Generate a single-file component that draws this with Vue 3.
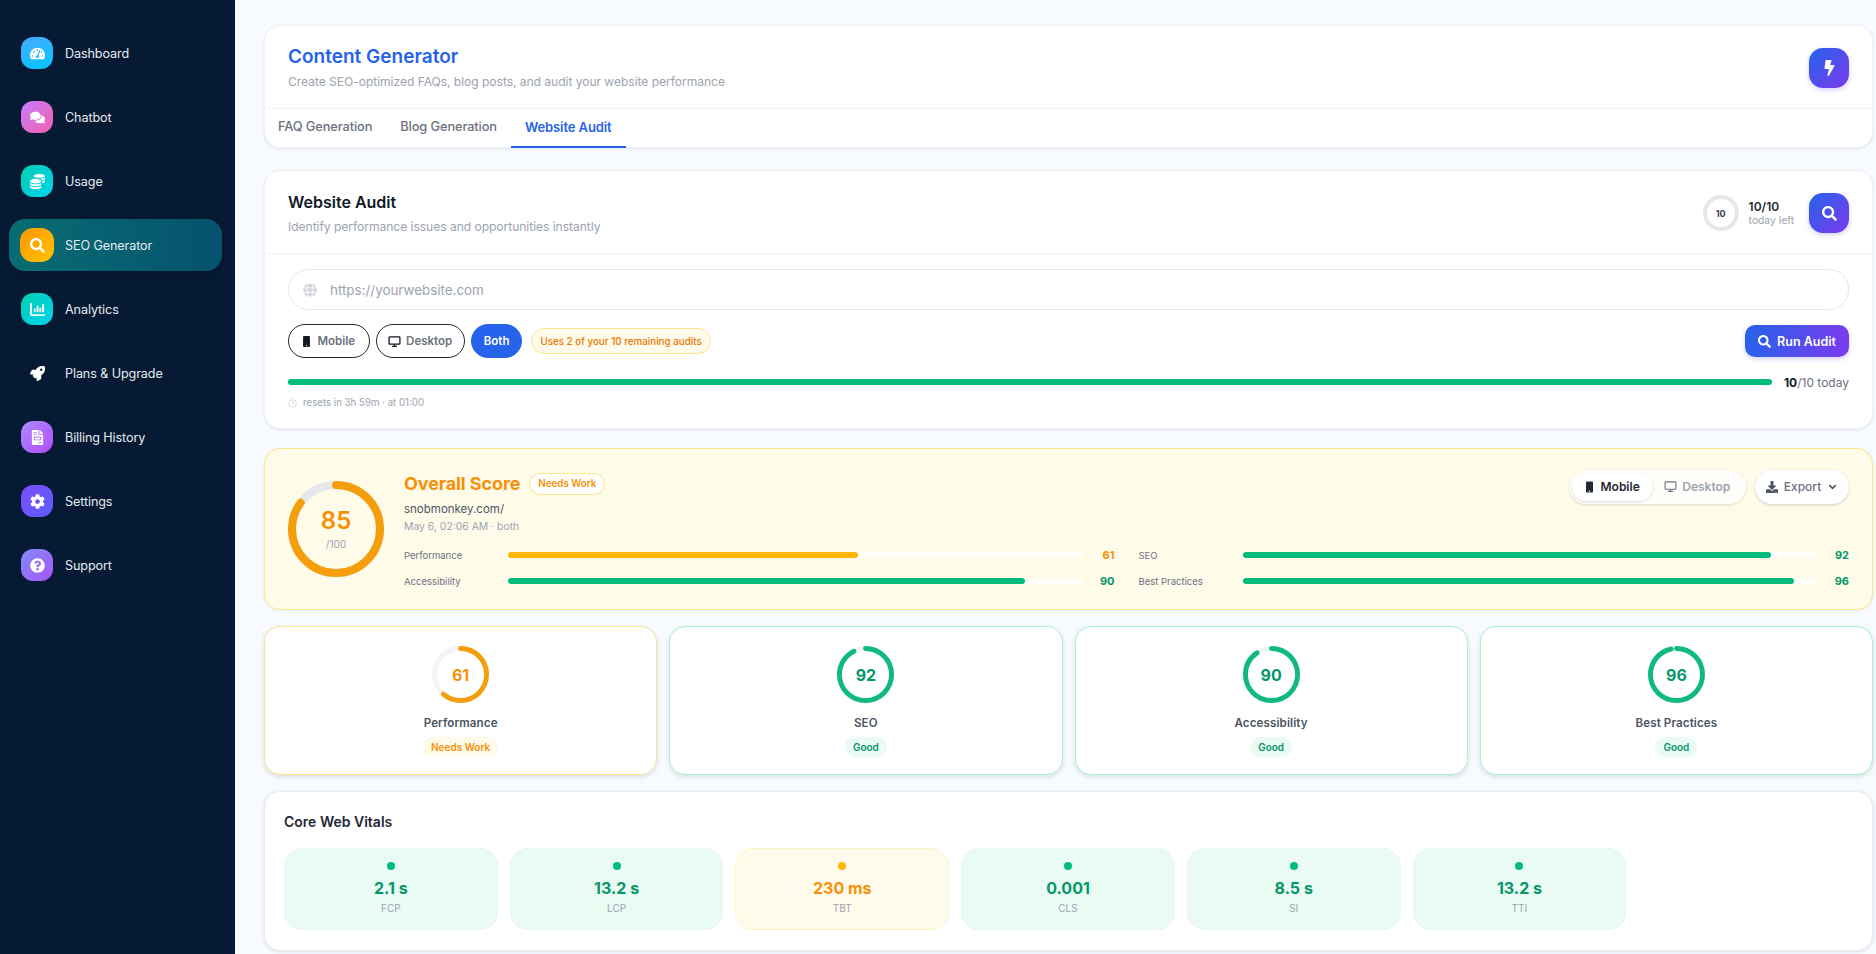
<script setup>
const P = {
  gauge: ['0 0 576 512', 'M288 32C128.94 32 0 160.94 0 320c0 52.8 14.25 102.26 39.06 144.8 5.61 9.62 16.3 15.2 27.44 15.2h443c11.14 0 21.83-5.58 27.44-15.2C561.75 422.26 576 372.8 576 320c0-159.06-128.94-288-288-288zm0 64c14.71 0 26.58 10.13 30.32 23.65-1.11 2.26-2.64 4.23-3.45 6.67l-9.22 27.67c-5.13 3.49-10.97 6.01-17.64 6.01-17.67 0-32-14.33-32-32S270.33 96 288 96zM96 384c-17.67 0-32-14.33-32-32s14.33-32 32-32 32 14.33 32 32-14.33 32-32 32zm48-160c-17.67 0-32-14.33-32-32s14.33-32 32-32 32 14.33 32 32-14.33 32-32 32zm246.77-72.41l-61.33 184C343.13 347.33 352 364.54 352 384c0 11.72-3.38 22.55-8.88 32H232.88c-5.5-9.45-8.88-20.28-8.88-32 0-33.94 26.5-61.43 59.9-63.59l61.34-184.01c4.17-12.56 17.73-19.45 30.36-15.17 12.57 4.19 19.35 17.79 15.17 30.36zm14.66 57.2l15.52-46.55c3.47-1.29 7.13-2.23 11.05-2.23 17.67 0 32 14.33 32 32s-14.33 32-32 32c-11.38-.01-20.89-6.28-26.57-15.22zM480 384c-17.67 0-32-14.33-32-32s14.33-32 32-32 32 14.33 32 32-14.33 32-32 32z'],
  comments: ['0 0 576 512', 'M416 192c0-88.4-93.1-160-208-160S0 103.6 0 192c0 34.3 14.1 65.9 38 92-13.4 30.2-35.5 54.2-35.8 54.5-2.2 2.3-2.8 5.7-1.5 8.7S4.8 352 8 352c36.6 0 66.9-12.3 88.7-25 32.2 15.7 70.3 25 111.3 25 114.9 0 208-71.6 208-160zm122 220c23.9-26 38-57.7 38-92 0-66.9-53.5-124.2-129.3-148.1.9 6.6 1.3 13.3 1.3 20.1 0 105.9-107.7 192-240 192-10.8 0-21.3-.8-31.7-1.9C207.8 439.6 281.8 480 368 480c41 0 79.1-9.2 111.3-25 21.8 12.7 52.1 25 88.7 25 3.2 0 6.1-1.9 7.3-4.8 1.3-2.9.7-6.3-1.5-8.7-.3-.3-22.4-24.2-35.8-54.5z'],
  coins: ['0 0 512 512', 'M0 405.3V448c0 35.3 86 64 192 64s192-28.7 192-64v-42.7C342.7 434.4 267.2 448 192 448S41.3 434.4 0 405.3zM320 128c106 0 192-28.7 192-64S426 0 320 0 128 28.7 128 64s86 64 192 64zM0 300.4V352c0 35.3 86 64 192 64s192-28.7 192-64v-51.6c-41.3 34-116.9 51.6-192 51.6S41.3 334.4 0 300.4zm416 11c57.3-11.1 96-31.7 96-55.4v-42.7c-23.2 16.4-57.3 27.6-96 34.5v63.6zM192 160C86 160 0 195.8 0 240s86 80 192 80 192-35.8 192-80-86-80-192-80zm219.3 56.3c60-10.8 100.7-32 100.7-56.3v-42.7c-35.5 25.1-96.5 38.6-160.7 41.8 29.5 14.3 51.2 33.5 60 57.2z'],
  search: ['0 0 512 512', 'M505 442.7L405.3 343c-4.5-4.5-10.6-7-17-7H372c27.6-35.3 44-79.7 44-128C416 93.1 322.9 0 208 0S0 93.1 0 208s93.1 208 208 208c48.3 0 92.7-16.4 128-44v16.3c0 6.4 2.5 12.5 7 17l99.7 99.7c9.4 9.4 24.6 9.4 33.9 0l28.3-28.3c9.4-9.4 9.4-24.6.1-34zM208 336c-70.7 0-128-57.2-128-128 0-70.7 57.2-128 128-128 70.7 0 128 57.2 128 128 0 70.7-57.2 128-128 128z'],
  chart: ['0 0 512 512', 'M32 32c17.7 0 32 14.3 32 32V400c0 8.8 7.2 16 16 16H480c17.7 0 32 14.3 32 32s-14.3 32-32 32H80c-44.2 0-80-35.8-80-80V64C0 46.3 14.3 32 32 32zM160 224c17.7 0 32 14.3 32 32v64c0 17.7-14.3 32-32 32s-32-14.3-32-32V256c0-17.7 14.3-32 32-32zm128-64V320c0 17.7-14.3 32-32 32s-32-14.3-32-32V160c0-17.7 14.3-32 32-32s32 14.3 32 32zm64 32c17.7 0 32 14.3 32 32v96c0 17.7-14.3 32-32 32s-32-14.3-32-32V224c0-17.7 14.3-32 32-32zM480 96V320c0 17.7-14.3 32-32 32s-32-14.3-32-32V96c0-17.7 14.3-32 32-32s32 14.3 32 32z'],
  rocket: ['0 0 512 512', 'M505.12019,19.09375c-1.18945-5.53125-6.65819-11-12.207-12.1875C460.716,0,435.507,0,410.40747,0,307.17523,0,245.26909,55.20312,199.05238,128H94.83772c-16.34763.01562-35.55658,11.875-42.88664,26.48438L2.51562,253.29688A28.4,28.4,0,0,0,0,264a24.00867,24.00867,0,0,0,24.00582,24H127.81618l-22.47457,22.46875c-11.36521,11.36133-12.99607,32.25781,0,45.25L156.24582,406.625c11.15623,11.1875,32.15619,13.15625,45.27726,0l22.47457-22.46875V488a24.00867,24.00867,0,0,0,24.00581,24,28.55934,28.55934,0,0,0,10.707-2.51562l98.72834-49.39063c14.62888-7.29687,26.50776-26.5,26.50776-42.85937V312.79688c72.59753-46.3125,128.03493-108.40626,128.03493-211.09376C512.07526,76.5,512.07526,51.29688,505.12019,19.09375ZM384.04033,168A40,40,0,1,1,424.05,128,40.02322,40.02322,0,0,1,384.04033,168Z'],
  invoice: ['0 0 384 512', 'M288 256H96v64h192v-64zm89-151L279.1 7c-4.5-4.5-10.6-7-17-7H256v128h128v-6.1c0-6.3-2.5-12.4-7-16.9zm-153 31V0H24C10.7 0 0 10.7 0 24v464c0 13.3 10.7 24 24 24h336c13.3 0 24-10.7 24-24V160H248c-13.2 0-24-10.8-24-24zM64 72c0-4.42 3.58-8 8-8h80c4.42 0 8 3.58 8 8v16c0 4.42-3.58 8-8 8H72c-4.42 0-8-3.58-8-8V72zm0 64c0-4.42 3.58-8 8-8h80c4.42 0 8 3.58 8 8v16c0 4.42-3.58 8-8 8H72c-4.42 0-8-3.58-8-8v-16zm256 304c0 4.42-3.58 8-8 8h-80c-4.42 0-8-3.58-8-8v-16c0-4.42 3.58-8 8-8h80c4.42 0 8 3.58 8 8v16zm0-200v96c0 8.84-7.16 16-16 16H80c-8.84 0-16-7.16-16-16v-96c0-8.84 7.16-16 16-16h224c8.84 0 16 7.16 16 16z'],
  cog: ['0 0 512 512', 'M487.4 315.7l-42.6-24.6c4.3-23.2 4.3-47 0-70.2l42.6-24.6c4.9-2.8 7.1-8.6 5.5-14-11.1-35.6-30-67.8-54.7-94.6-3.8-4.1-10-5.1-14.8-2.3L380.8 110c-17.9-15.4-38.5-27.3-60.8-35.1V25.8c0-5.6-3.9-10.5-9.4-11.7-36.7-8.2-74.3-7.8-109.2 0-5.5 1.2-9.4 6.1-9.4 11.7V75c-22.2 7.9-42.8 19.8-60.8 35.1L88.7 85.5c-4.9-2.8-11-1.9-14.8 2.3-24.7 26.7-43.6 58.9-54.7 94.6-1.7 5.4.6 11.2 5.5 14L67.3 221c-4.3 23.2-4.3 47 0 70.2l-42.6 24.6c-4.9 2.8-7.1 8.6-5.5 14 11.1 35.6 30 67.8 54.7 94.6 3.8 4.1 10 5.1 14.8 2.3l42.6-24.6c17.9 15.4 38.5 27.3 60.8 35.1v49.2c0 5.6 3.9 10.5 9.4 11.7 36.7 8.2 74.3 7.8 109.2 0 5.5-1.2 9.4-6.1 9.4-11.7v-49.2c22.2-7.9 42.8-19.8 60.8-35.1l42.6 24.6c4.9 2.8 11 1.9 14.8-2.3 24.7-26.7 43.6-58.9 54.7-94.6 1.5-5.5-.7-11.3-5.6-14.1zM256 336c-44.1 0-80-35.9-80-80s35.9-80 80-80 80 35.9 80 80-35.9 80-80 80z'],
  question: ['0 0 512 512', 'M504 256c0 136.997-111.043 248-248 248S8 392.997 8 256C8 119.083 119.043 8 256 8s248 111.083 248 248zM262.655 90c-54.497 0-89.255 22.957-116.549 63.758-3.536 5.286-2.353 12.415 2.715 16.258l34.699 26.31c5.205 3.947 12.621 3.008 16.665-2.122 17.864-22.658 30.113-35.797 57.303-35.797 20.429 0 45.698 13.148 45.698 32.958 0 14.976-12.363 22.667-32.534 33.976C247.128 238.528 216 254.941 216 296v4c0 6.627 5.373 12 12 12h56c6.627 0 12-5.373 12-12v-1.333c0-28.462 83.186-29.647 83.186-106.667 0-58.002-60.165-102-116.531-102zM256 338c-25.365 0-46 20.635-46 46 0 25.364 20.635 46 46 46s46-20.636 46-46c0-25.365-20.635-46-46-46z'],
  bolt: ['0 0 320 512', 'M296 160H180.6l42.6-129.8C227.2 15 215.7 0 200 0H56C44 0 33.8 8.9 32.2 20.8l-32 240C-1.7 275.2 9.5 288 24 288h118.7L96.6 482.5c-3.6 15.2 8 29.5 23.3 29.5 8.4 0 16.4-4.4 20.8-12l176-304c9.3-15.9-2.2-36-20.7-36z'],
  mobile: ['0 0 320 512', 'M272 0H48C21.5 0 0 21.5 0 48v416c0 26.5 21.5 48 48 48h224c26.5 0 48-21.5 48-48V48c0-26.5-21.5-48-48-48zM160 480c-17.7 0-32-14.3-32-32s14.3-32 32-32 32 14.3 32 32-14.3 32-32 32z'],
  download: ['0 0 512 512', 'M216 0h80c13.3 0 24 10.7 24 24v168h87.7c17.8 0 26.7 21.5 14.1 34.1L269.7 378.3c-7.5 7.5-19.8 7.5-27.3 0L90.1 226.1c-12.6-12.6-3.7-34.1 14.1-34.1H192V24c0-13.3 10.7-24 24-24zm296 376v112c0 13.3-10.7 24-24 24H24c-13.3 0-24-10.7-24-24V376c0-13.3 10.7-24 24-24h146.7l49 49c20.1 20.1 52.5 20.1 72.6 0l49-49H488c13.3 0 24 10.7 24 24zm-124 88c0-11-9-20-20-20s-20 9-20 20 9 20 20 20 20-9 20-20zm64 0c0-11-9-20-20-20s-20 9-20 20 9 20 20 20 20-9 20-20z'],
  globe: ['0 0 496 512', 'M336.5 160C322 70.7 287.8 8 248 8s-74 62.7-88.5 152h177zM152 256c0 22.2 1.2 43.5 3.3 64h185.3c2.1-20.5 3.3-41.8 3.3-64s-1.2-43.5-3.3-64H155.3c-2.1 20.5-3.3 41.8-3.3 64zm324.7-96c-28.6-67.9-86.5-120.4-158-141.6 24.4 33.8 41.2 84.7 50 141.6h108zM177.2 18.4C105.8 39.6 47.8 92.1 19.3 160h108c8.7-56.9 25.5-107.8 49.9-141.6zM487.4 192H372.7c2.1 21 3.3 42.5 3.3 64s-1.2 43-3.3 64h114.6c5.5-20.5 8.6-41.8 8.6-64s-3.1-43.5-8.5-64zM120 256c0-21.5 1.2-43 3.3-64H8.6C3.2 212.5 0 233.8 0 256s3.2 43.5 8.6 64h114.6c-2-21-3.2-42.5-3.2-64zm39.5 96c14.5 89.3 48.7 152 88.5 152s74-62.7 88.5-152h-177zm159.3 141.6c71.4-21.2 129.4-73.7 158-141.6h-108c-8.8 56.9-25.6 107.8-50 141.6zM19.3 352c28.6 67.9 86.5 120.4 158 141.6-24.4-33.8-41.2-84.7-50-141.6h-108z']
}

const nav = [
  { label: 'Dashboard', icon: 'gauge', bg: 'g-blue' },
  { label: 'Chatbot', icon: 'comments', bg: 'g-pink' },
  { label: 'Usage', icon: 'coins', bg: 'g-teal' },
  { label: 'SEO Generator', icon: 'search', bg: 'g-orange', active: true },
  { label: 'Analytics', icon: 'chart', bg: 'g-teal' },
  { label: 'Plans & Upgrade', icon: 'rocket', bg: 'g-none' },
  { label: 'Billing History', icon: 'invoice', bg: 'g-purple' },
  { label: 'Settings', icon: 'cog', bg: 'g-violet' },
  { label: 'Support', icon: 'question', bg: 'g-indigo' }
]

const bars = [
  { name: 'Performance', v: 61, tone: 'warn' },
  { name: 'SEO', v: 92, tone: 'good' },
  { name: 'Accessibility', v: 90, tone: 'good' },
  { name: 'Best Practices', v: 96, tone: 'good' }
]

const cards = [
  { name: 'Performance', v: 61, tone: 'warn', status: 'Needs Work' },
  { name: 'SEO', v: 92, tone: 'good', status: 'Good' },
  { name: 'Accessibility', v: 90, tone: 'good', status: 'Good' },
  { name: 'Best Practices', v: 96, tone: 'good', status: 'Good' }
]

const vitals = [
  { v: '2.1 s', k: 'FCP', tone: 'good' },
  { v: '13.2 s', k: 'LCP', tone: 'good' },
  { v: '230 ms', k: 'TBT', tone: 'warn' },
  { v: '0.001', k: 'CLS', tone: 'good' },
  { v: '8.5 s', k: 'SI', tone: 'good' },
  { v: '13.2 s', k: 'TTI', tone: 'good' }
]

const C = 2 * Math.PI
const dash = (r, v) => `${(C * r * v) / 100} ${C * r}`
</script>

<template>
  <div class="app">
    <aside class="side">
      <div v-for="n in nav" :key="n.label" class="nav" :class="{ on: n.active }">
        <span class="nav-ic" :class="n.bg">
          <svg class="ic16" :viewBox="P[n.icon][0]"><path :d="P[n.icon][1]" fill="currentColor" /></svg>
        </span>
        <span class="nav-t">{{ n.label }}</span>
      </div>
    </aside>

    <main class="main">
      <section class="card top">
        <div class="top-h">
          <div>
            <h1>Content Generator</h1>
            <p class="sub">Create SEO-optimized FAQs, blog posts, and audit your website performance</p>
          </div>
          <span class="sq"><svg class="ic-b" :viewBox="P.bolt[0]"><path :d="P.bolt[1]" fill="currentColor" /></svg></span>
        </div>
        <nav class="tabs">
          <span class="tab">FAQ Generation</span>
          <span class="tab">Blog Generation</span>
          <span class="tab act">Website Audit</span>
        </nav>
      </section>

      <section class="card audit">
        <div class="au-h">
          <div>
            <h2>Website Audit</h2>
            <p class="sub">Identify performance issues and opportunities instantly</p>
          </div>
          <div class="quota">
            <span class="q-ring">10</span>
            <div class="q-t"><b>10/10</b><small>today left</small></div>
            <span class="sq"><svg class="ic16" :viewBox="P.search[0]"><path :d="P.search[1]" fill="currentColor" /></svg></span>
          </div>
        </div>
        <div class="au-b">
          <div class="input">
            <svg class="globe" :viewBox="P.globe[0]"><path :d="P.globe[1]" fill="currentColor" /></svg>
            <span>https://yourwebsite.com</span>
          </div>
          <div class="ctl">
            <span class="pill"><svg class="ic-m" :viewBox="P.mobile[0]"><path :d="P.mobile[1]" fill="currentColor" /></svg>Mobile</span>
            <span class="pill desk">
              <svg class="ic-d" viewBox="0 0 24 24" fill="none" stroke="#111827" stroke-width="2.4"><rect x="2" y="3.5" width="20" height="13.5" rx="1.5" /><path d="M12 17v4M7.5 21h9" /></svg>Desktop
            </span>
            <span class="pill both">Both</span>
            <span class="note">Uses 2 of your 10 remaining audits</span>
            <span class="run"><svg class="ic14" :viewBox="P.search[0]"><path :d="P.search[1]" fill="currentColor" /></svg>Run Audit</span>
          </div>
          <div class="prog">
            <span class="prog-t"><i></i></span>
            <span class="prog-l"><b>10</b>/10 today</span>
          </div>
          <div class="reset">
            <svg class="clock" viewBox="0 0 24 24" fill="none" stroke="currentColor" stroke-width="2"><circle cx="12" cy="12" r="10" /><path d="M12 6.5V12l3.5 2" /></svg>
            resets in 3h 59m · at 01:00
          </div>
        </div>
      </section>

      <section class="over">
        <div class="o-ring">
          <svg viewBox="0 0 96 96">
            <circle cx="48" cy="48" r="44" fill="none" stroke="#e5e7eb" stroke-width="8" />
            <circle cx="48" cy="48" r="44" fill="none" stroke="#f59e0b" stroke-width="8" stroke-linecap="round" :stroke-dasharray="dash(44, 85)" transform="rotate(-90 48 48)" />
          </svg>
          <div class="o-c"><b>85</b><small>/100</small></div>
        </div>
        <div class="o-body">
          <div class="o-top">
            <div>
              <div class="o-title"><strong>Overall Score</strong><span class="o-badge">Needs Work</span></div>
              <div class="o-url">snobmonkey.com/</div>
              <div class="o-date">May 6, 02:06 AM · both</div>
            </div>
            <div class="o-act">
              <div class="seg">
                <span class="seg-i on"><svg class="ic-m2" :viewBox="P.mobile[0]"><path :d="P.mobile[1]" fill="currentColor" /></svg>Mobile</span>
                <span class="seg-i off">
                  <svg class="ic-d" viewBox="0 0 24 24" fill="none" stroke="currentColor" stroke-width="2"><rect x="2" y="3.5" width="20" height="13.5" rx="1.5" /><path d="M12 17v4M7.5 21h9" /></svg>Desktop
                </span>
              </div>
              <span class="exp">
                <svg class="ic13" :viewBox="P.download[0]"><path :d="P.download[1]" fill="currentColor" /></svg>Export
                <svg class="chev" viewBox="0 0 12 12" fill="none" stroke="currentColor" stroke-width="1.8"><path d="M2.5 4.5 6 8l3.5-3.5" /></svg>
              </span>
            </div>
          </div>
          <div class="o-bars">
            <div v-for="b in bars" :key="b.name" class="o-bar" :class="b.tone">
              <span class="o-n">{{ b.name }}</span>
              <span class="o-t"><i :style="{ width: b.v + '%' }"></i></span>
              <b class="o-v">{{ b.v }}</b>
            </div>
          </div>
        </div>
      </section>

      <section class="scores">
        <div v-for="c in cards" :key="c.name" class="score" :class="c.tone">
          <div class="s-ring">
            <svg viewBox="0 0 58 58">
              <circle cx="29" cy="29" r="26.5" fill="none" stroke="#f3f4f6" stroke-width="5" />
              <circle class="arc" cx="29" cy="29" r="26.5" fill="none" stroke-width="5" stroke-linecap="round" :stroke-dasharray="dash(26.5, c.v)" transform="rotate(-90 29 29)" />
            </svg>
            <b>{{ c.v }}</b>
          </div>
          <div class="s-n">{{ c.name }}</div>
          <span class="s-b">{{ c.status }}</span>
        </div>
      </section>

      <section class="card vit">
        <h3>Core Web Vitals</h3>
        <div class="v-grid">
          <div v-for="v in vitals" :key="v.k" class="tile" :class="v.tone">
            <i class="dot"></i>
            <b>{{ v.v }}</b>
            <small>{{ v.k }}</small>
          </div>
        </div>
      </section>
    </main>
  </div>
</template>

<style>
html, body { margin: 0; height: 100%; overflow: hidden; }
</style>

<style scoped>
* { box-sizing: border-box; }
.app {
  display: flex;
  height: 954px;
  overflow: hidden;
  font-family: Inter, "Noto Sans", sans-serif;
  background: #f7faff;
  color: #111827;
}
.side {
  width: 235px;
  flex: none;
  background: #061a33;
  padding: 27px 13px 0 9px;
  display: flex;
  flex-direction: column;
  gap: 12px;
}
.nav {
  height: 52px;
  display: flex;
  align-items: center;
  padding-left: 12px;
  gap: 12px;
  border-radius: 16px;
  color: #e6ebf2;
}
.nav.on {
  background: linear-gradient(90deg, #086d72, #05526e);
  padding-left: 11px;
  gap: 11px;
  box-shadow: 0 4px 12px rgba(0, 0, 0, .12);
}
.nav-t { font-size: 12.6px; letter-spacing: -.1px; font-weight: 400; }
.nav-ic {
  width: 32px; height: 32px; border-radius: 12px;
  display: flex; align-items: center; justify-content: center;
  color: #fff;
  flex: none;
}
.nav.on .nav-ic { width: 34px; height: 34px; border-radius: 13px; }
.ic16 { width: 15px; height: 15px; }
.ic14 { width: 13px; height: 13px; }
.ic13 { width: 12px; height: 12px; }
.g-blue { background: linear-gradient(160deg, #4aa8ff, #00c8ff); }
.g-pink { background: linear-gradient(135deg, #c77dff, #f25fae); }
.g-teal { background: linear-gradient(135deg, #00cdb0, #00d4f0); }
.g-orange { background: linear-gradient(135deg, #ff9500, #ffc400); }
.g-none { background: transparent; box-shadow: 0 0 6px rgba(0, 0, 0, .12); }
.g-purple { background: linear-gradient(135deg, #a78bfa, #b44dff); }
.g-violet { background: linear-gradient(135deg, #7c4dff, #5c5cff); }
.g-indigo { background: linear-gradient(135deg, #818cf8, #a855f7); }

.main {
  flex: 1;
  min-width: 0;
  padding: 25px 3px 0 29px;
  display: flex;
  flex-direction: column;
  gap: 22px;
}
.card {
  background: #fff;
  border-radius: 16px;
  box-shadow: 0 1px 3px rgba(17, 24, 39, .1);
  border: 1px solid #f0f2f6;
}
.top { height: 123px; }
.top-h {
  height: 83px;
  display: flex; justify-content: space-between; align-items: center;
  padding: 2px 23px 0 23px;
  border-bottom: 1px solid #f1f3f6;
}
.sq {
  width: 40px; height: 40px; border-radius: 14px;
  background: linear-gradient(135deg, #2563eb, #7c3aed);
  color: #fff;
  display: flex; align-items: center; justify-content: center;
  box-shadow: 0 2px 5px rgba(79, 70, 229, .25);
  flex: none;
}
.ic-b { width: 11px; height: 16px; }
h1 { margin: 0 0 4px; font-size: 19px; line-height: 24px; font-weight: 600; color: #2563eb; }
h2 { margin: 0 0 5px; font-size: 16px; line-height: 22px; font-weight: 600; color: #111827; }
.sub { margin: 0; font-size: 12.1px; line-height: 18px; color: #9ca3af; letter-spacing: -.05px; }
.tabs { display: flex; height: 39px; margin-left: -1px; }
.tab {
  padding: 0 14px;
  font-size: 12.8px; line-height: 36px; font-weight: 500;
  color: #6b7280;
  border-bottom: 2px solid transparent;
  letter-spacing: -.1px;
}
.tab.act { color: #2563eb; border-bottom-color: #2563eb; font-weight: 600; font-size: 13px; }

.audit { height: 259px; }
.au-h {
  height: 83px;
  display: flex; justify-content: space-between; align-items: center;
  padding: 2px 23px 0 23px;
  border-bottom: 1px solid #f1f3f6;
}
.quota { display: flex; align-items: center; }
.q-ring {
  width: 36px; height: 36px; border-radius: 50%;
  border: 4px solid #e5e7eb;
  display: flex; align-items: center; justify-content: center;
  font-size: 9px; font-weight: 700; color: #374151;
}
.q-t { margin: 0 15px 0 10px; display: flex; flex-direction: column; }
.q-t b { font-size: 12px; line-height: 15px; font-weight: 600; color: #1f2937; }
.q-t small { font-size: 10.3px; line-height: 13px; color: #9ca3af; }
.au-b { padding: 15px 23px 0 23px; }
.input {
  height: 41px;
  border: 1px solid #e5e7eb; border-radius: 20px;
  display: flex; align-items: center;
  padding-left: 14px;
  font-size: 13.4px; color: #9ca3af;
  gap: 13px;
}
.globe { width: 14px; height: 14px; color: #d1d5db; }
.ctl { display: flex; align-items: center; margin-top: 14px; gap: 6px; }
.pill {
  height: 34px;
  border: 1px solid #1f2937; border-radius: 17px;
  display: flex; align-items: center; gap: 8px;
  padding: 0 13.5px;
  font-size: 11.5px; font-weight: 600; color: #6b7280;
}
.pill.desk { gap: 5px; padding: 0 11.5px; }
.pill.both { background: #2563eb; border-color: #2563eb; color: #fff; padding: 0 12px; }
.ic-m { width: 7px; height: 11px; color: #111827; }
.ic-m2 { width: 7px; height: 12px; }
.ic-d { width: 13px; height: 13px; }
.note {
  margin-left: 3px;
  height: 26px;
  border: 1px solid #fde68a; border-radius: 13px;
  background: #fffbeb;
  padding: 0 8px;
  display: flex; align-items: center;
  font-size: 9.8px; font-weight: 500; color: #ea7600;
}
.run {
  margin-left: auto;
  height: 32px; width: 104px;
  border-radius: 10px;
  background: linear-gradient(100deg, #2563eb, #7c3aed);
  color: #fff;
  font-size: 12.5px; font-weight: 600;
  display: flex; align-items: center; justify-content: center; gap: 6px;
  box-shadow: 0 2px 5px rgba(79, 70, 229, .25);
}
.prog { display: flex; align-items: center; gap: 12px; margin-top: 21px; height: 6px; }
.prog-t { flex: 1; height: 6px; border-radius: 3px; background: #f3f4f6; }
.prog-t i { display: block; height: 100%; border-radius: 3px; background: #00bd7e; }
.prog-l { font-size: 12px; color: #6b7280; white-space: nowrap; }
.prog-l b { color: #111827; font-weight: 700; }
.reset {
  margin-top: 11px;
  display: flex; align-items: center; gap: 6px;
  font-size: 9.7px; line-height: 14px; color: #9ca3af;
}
.clock { width: 9px; height: 9px; color: #c9ced6; }

.over {
  margin-top: -3px;
  height: 162px;
  background: #fffbe9;
  border: 1px solid #fde68a;
  border-radius: 16px;
  padding: 0 23px 0 23px;
  display: flex; align-items: center; gap: 20px;
  box-shadow: 0 1px 4px rgba(17, 24, 39, .06);
}
.o-ring { width: 96px; height: 96px; position: relative; flex: none; }
.o-ring svg { display: block; width: 96px; height: 96px; }
.o-c {
  position: absolute; inset: 0;
  display: flex; flex-direction: column; align-items: center; justify-content: center;
}
.o-c b { font-size: 24px; line-height: 28px; font-weight: 600; color: #f79009; }
.o-c small { margin-top: 2px; font-size: 10px; line-height: 14px; color: #9ca3af; }
.o-body { flex: 1; min-width: 0; padding-top: 4px; }
.o-top { display: flex; justify-content: space-between; align-items: flex-start; height: 74px; }
.o-title { display: flex; align-items: center; gap: 9px; height: 24px; }
.o-title strong { font-size: 18px; font-weight: 700; color: #f79009; letter-spacing: -.1px; }
.o-badge {
  height: 22px; border-radius: 11px;
  border: 1px solid #fde68a; background: #fff;
  padding: 0 8px;
  display: flex; align-items: center;
  font-size: 9.8px; font-weight: 600; color: #f79009;
}
.o-url { margin-top: 5px; font-size: 11.5px; line-height: 16px; color: #4b5563; }
.o-date { margin-top: 3px; font-size: 10.4px; line-height: 14px; color: #9ca3af; }
.o-act { display: flex; gap: 9px; margin-top: -2px; }
.seg {
  height: 34px; border-radius: 17px;
  background: #fffefa;
  box-shadow: 0 1px 3px rgba(17, 24, 39, .14);
  display: flex; align-items: center;
  padding: 0 3px;
  width: 177px;
}
.seg-i {
  height: 28px; padding: 0 13.5px; border-radius: 14px;
  display: flex; align-items: center; gap: 8px;
  font-size: 12px; font-weight: 600; color: #9ca3af;
}
.seg-i.off { gap: 5px; padding-left: 11px; }
.seg-i .ic-d { color: #6b7280; }
.seg-i.on { background: #fff; color: #1f2937; box-shadow: 0 1px 3px rgba(17, 24, 39, .14); }
.exp {
  width: 94px; height: 34px; border-radius: 17px;
  background: #fff;
  box-shadow: 0 1px 3px rgba(17, 24, 39, .2);
  display: flex; align-items: center; justify-content: center; gap: 6px;
  font-size: 12px; font-weight: 500; color: #6b7280;
}
.exp .ic13 { color: #4b5563; }
.chev { width: 11px; height: 11px; color: #4b5563; }
.o-bars { display: grid; grid-template-columns: 1fr 1fr; column-gap: 24px; row-gap: 7px; }
.o-bar { display: flex; align-items: center; height: 19px; }
.o-n { width: 104px; flex: none; font-size: 9.5px; color: #6b7280; }
.o-t { flex: 1; height: 6px; border-radius: 3px; background: #fffef8; }
.o-t i { display: block; height: 100%; border-radius: 3px; }
.o-v { width: 32px; flex: none; text-align: right; font-size: 11px; font-weight: 700; }
.good .o-t i { background: #00bd7e; }
.warn .o-t i { background: #ffb703; }
.good .o-v { color: #059669; }
.warn .o-v { color: #f79009; }

.scores { margin-top: -6px; display: grid; grid-template-columns: repeat(4, 1fr); gap: 12px; }
.score {
  height: 149px;
  background: #fff;
  border: 1.5px solid #a7f3d0;
  border-radius: 16px;
  display: flex; flex-direction: column; align-items: center;
  padding-top: 19px;
  box-shadow: 0 2px 5px rgba(17, 24, 39, .12);
}
.score.warn { border-color: #fde68a; }
.s-ring { width: 57px; height: 57px; position: relative; display: flex; align-items: center; justify-content: center; }
.s-ring svg { position: absolute; inset: 0; width: 57px; height: 57px; }
.s-ring b { font-size: 16px; font-weight: 700; }
.score.good .s-ring b { color: #059669; }
.score.warn .s-ring b { color: #f79009; }
.good .arc { stroke: #10b981; }
.warn .arc { stroke: #f59e0b; }
.s-n { margin-top: 12px; font-size: 11.6px; line-height: 16px; font-weight: 600; color: #4b5563; letter-spacing: .1px; }
.s-b {
  margin-top: 6px; height: 20px; border-radius: 10px;
  padding: 0 8px;
  display: flex; align-items: center;
  font-size: 10px; font-weight: 600;
}
.good .s-b { background: #e9fbf3; color: #059669; }
.warn .s-b { background: #fffbeb; color: #f79009; }

.vit {
  margin-top: -6px;
  height: 160px;
  padding: 20px 20px 0 19px;
  border-color: #e8ebf1;
  box-shadow: 0 1px 4px rgba(17, 24, 39, .12);
}
h3 { margin: 0; font-size: 14px; line-height: 20px; font-weight: 600; color: #1f2937; }
.v-grid {
  margin-top: 16px;
  display: grid;
  grid-template-columns: repeat(auto-fill, minmax(200px, 1fr));
  gap: 12px;
}
.tile {
  height: 82px; border-radius: 18px;
  display: flex; flex-direction: column; align-items: center;
  padding-top: 13px;
  border: 1px solid #e6f8f0;
  background: #eafbf4;
}
.tile.warn { background: #fffbeb; border-color: #fef3c7; }
.dot { width: 8px; height: 8px; border-radius: 50%; background: #00bd7e; }
.tile.warn .dot { background: #ffb703; }
.tile b { margin-top: 7px; font-size: 16px; line-height: 22px; font-weight: 700; color: #059669; }
.tile.warn b { color: #f79009; }
.tile small { margin-top: 2px; font-size: 10px; line-height: 14px; color: #9ca3af; }
</style>
